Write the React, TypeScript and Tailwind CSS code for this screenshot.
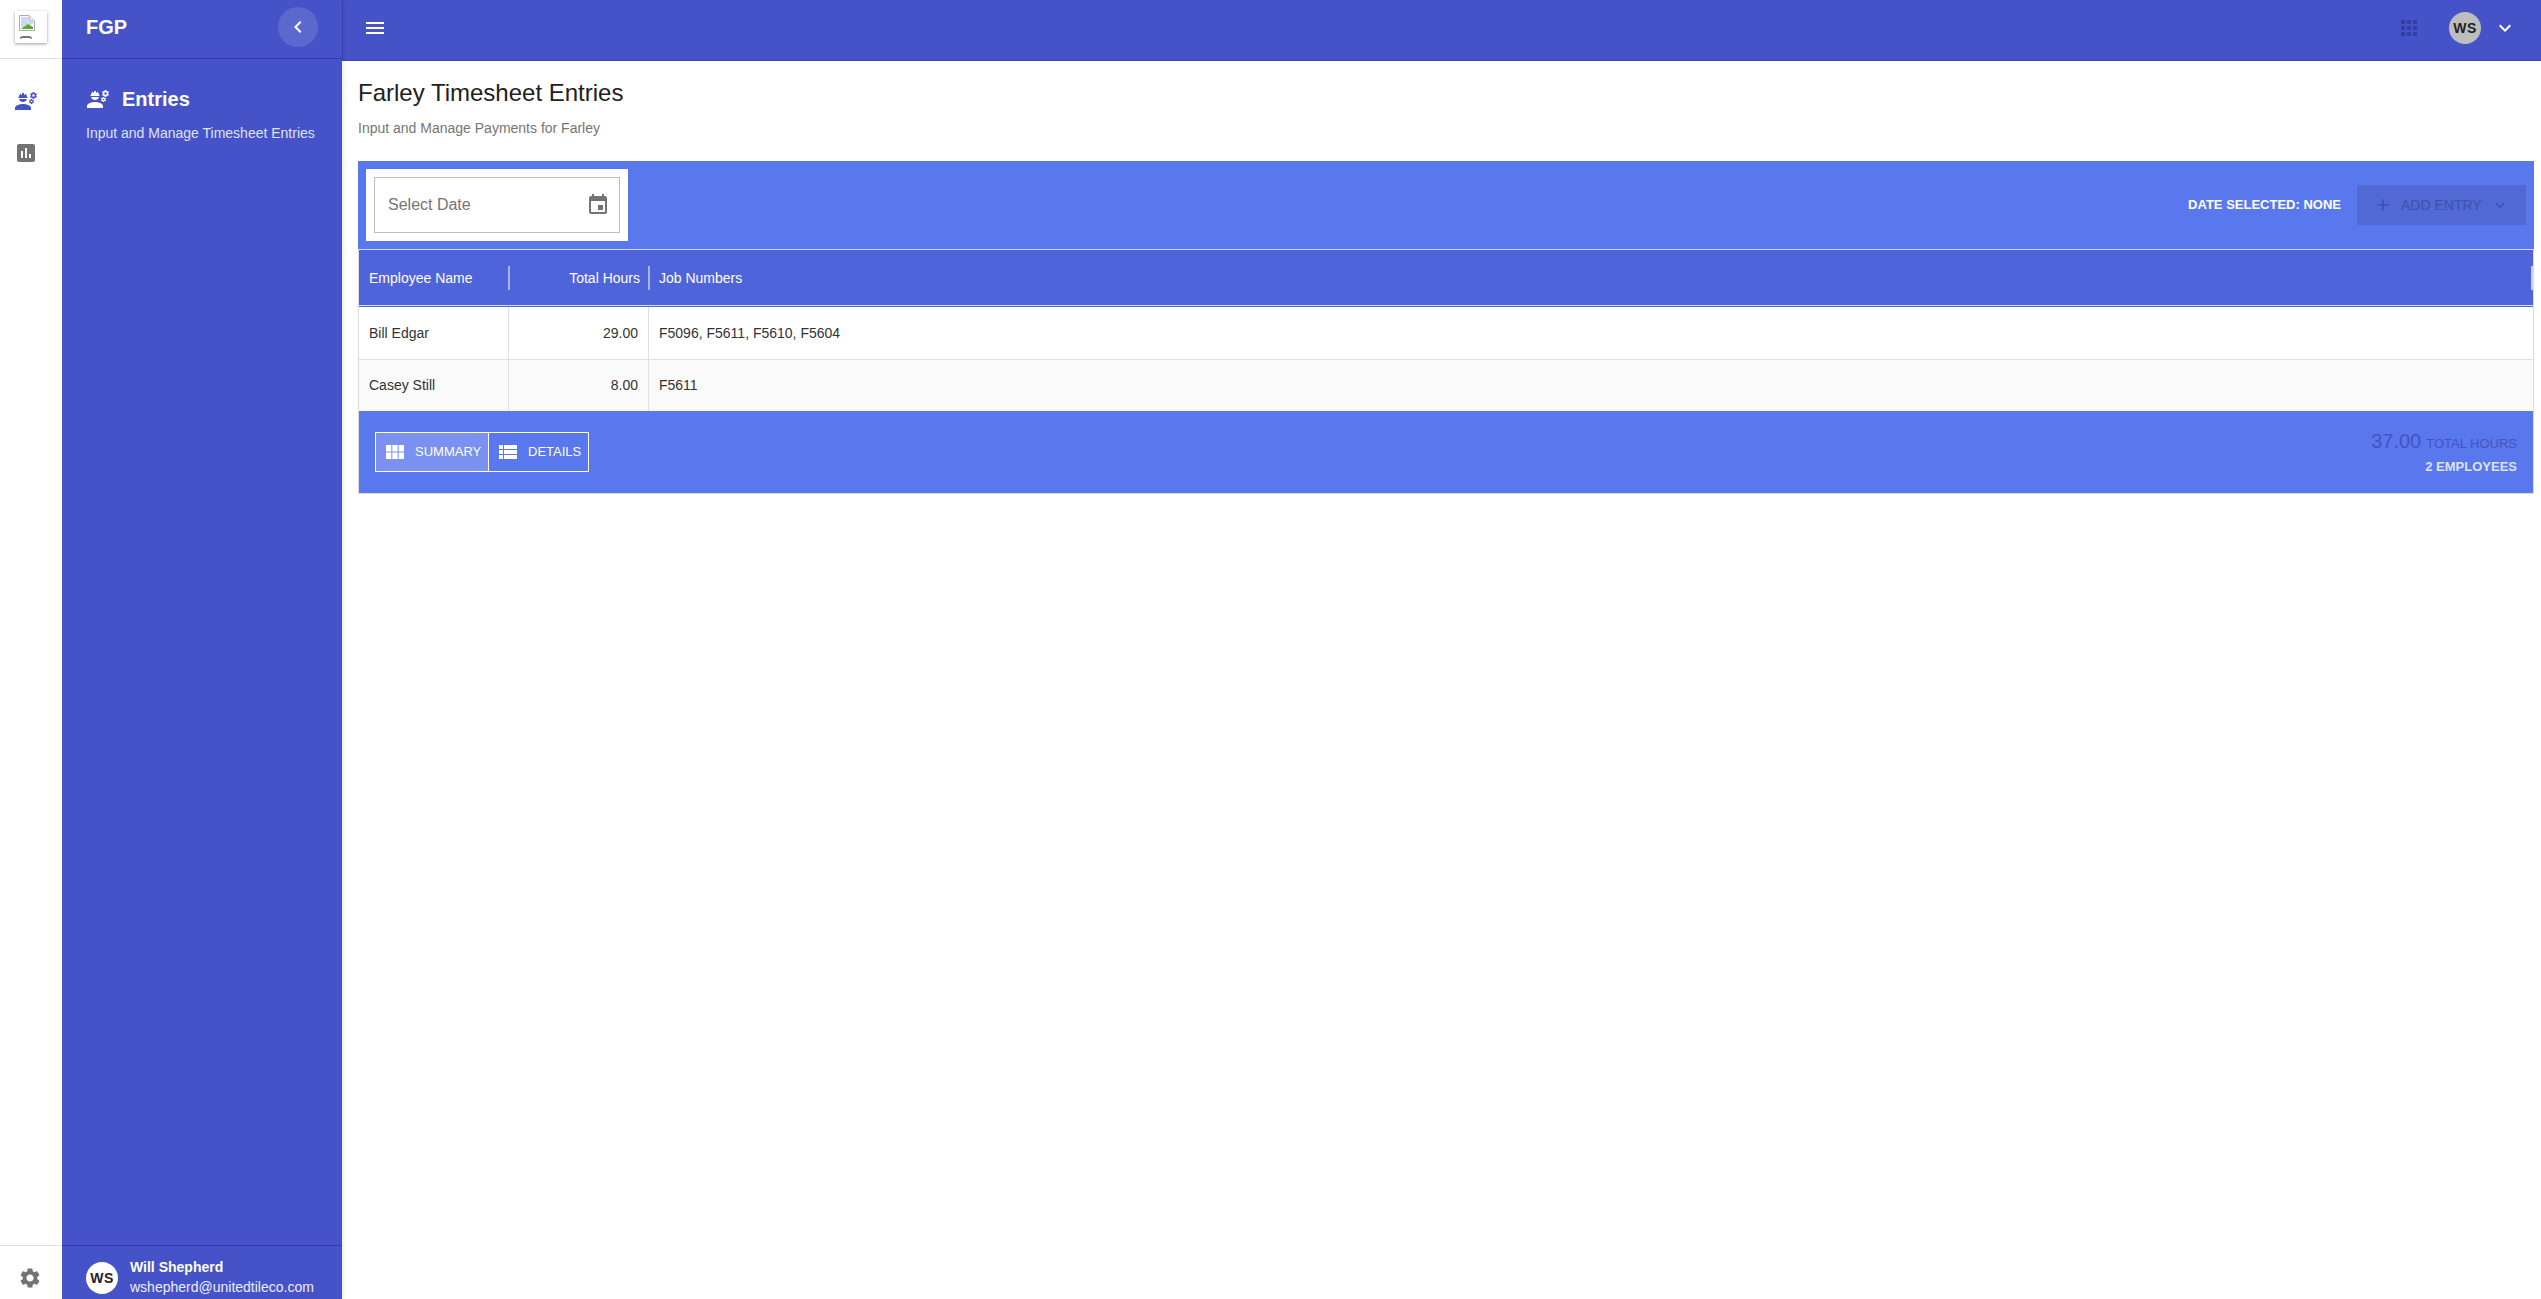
import React from "react";
import { MdEngineering, MdAssessment, MdSettings, MdEvent, MdViewModule, MdViewList, MdApps, MdMenu, MdKeyboardArrowDown, MdChevronLeft, MdAdd } from "react-icons/md";

function BrokenImage() {
  return (
    <svg width="16" height="16" viewBox="0 0 16 16">
      <path d="M0.5 0.5H10L15.5 6V15.5H0.5Z" fill="#fff" stroke="#a8adb3" />
      <path d="M10 .5V6H15.5" fill="#e8eaed" stroke="#a8adb3" />
      <path d="M2 2H9V7L14 7V9L2 13Z" fill="#c6d9f7" />
      <path d="M2 14L9 9L14 12V14Z" fill="#5fa82a" />
    </svg>
  );
}

function Rail() {
  return (
    <aside className="w-[62px] shrink-0 h-full bg-white flex flex-col">
      <div className="h-[59px] shrink-0 border-b border-[#e0e0e0] flex items-start justify-center pt-[11px]">
        <div className="w-[32px] h-[32px] bg-white shadow-[0_1px_3px_rgba(0,0,0,0.4)] flex flex-col items-start overflow-hidden pt-[4px] pl-[4px]">
          <BrokenImage />
          <div className="w-[12px] h-[3px] ml-[1px] mt-[5px] border-t-2 border-x border-[#777] rounded-t-sm" />
        </div>
      </div>
      <div className="flex-1 flex flex-col items-start pl-[14px] pt-[30px] gap-[28px]">
        <MdEngineering className="text-[#4652c6]" size={24} />
        <MdAssessment className="text-[#737373]" size={24} />
      </div>
      <div className="h-[54px] shrink-0 border-t border-[#e0e0e0] flex items-start pl-[18px] pt-[20px]">
        <MdSettings className="text-[#737373]" size={24} />
      </div>
    </aside>
  );
}

function Sidebar() {
  return (
    <aside className="w-[280px] shrink-0 h-full bg-[#4653c8] flex flex-col text-white shadow-[2px_0_4px_rgba(0,0,0,0.08)] z-10">
      <div className="h-[59px] shrink-0 border-b border-[#3a3ab0] flex items-start justify-between pl-[24px] pr-[24px] pt-[7px]">
        <span className="text-[20px] font-bold leading-[24px] mt-[8px]">FGP</span>
        <div className="w-[40px] h-[40px] rounded-full bg-[#5d68cf] flex items-center justify-center">
          <MdChevronLeft size={24} />
        </div>
      </div>
      <div className="flex-1 pl-[24px] pt-[26px]">
        <div className="flex items-center gap-[12px] h-[28px]">
          <MdEngineering size={24} />
          <span className="text-[20px] font-bold">Entries</span>
        </div>
        <p className="text-[14px] mt-[10px] text-[#dfe2f7] leading-[20px]">Input and Manage Timesheet Entries</p>
      </div>
      <div className="h-[54px] shrink-0 border-t border-[#3a3ab0] flex items-start pl-[24px] pt-[16px] gap-[12px]">
        <div className="w-[32px] h-[32px] rounded-full bg-white text-[#222] font-bold text-[14px] flex items-center justify-center tracking-[0.5px]">WS</div>
        <div className="-mt-[5px]">
          <div className="text-[14px] font-bold leading-[20px]">Will Shepherd</div>
          <div className="text-[14px] leading-[21px] text-[#eceefb]">wshepherd@unitedtileco.com</div>
        </div>
      </div>
    </aside>
  );
}

function TopBar() {
  return (
    <header className="h-[61px] shrink-0 bg-[#4653c8] border-b border-l border-[#3c45b8] flex items-start justify-between pl-[20px] pr-[24px] pt-[12px] text-white">
      <MdMenu size={24} className="mt-[4px]" />
      <div className="flex items-center">
        <MdApps size={24} className="text-[#323ea0] mr-[28px]" />
        <div className="w-[32px] h-[32px] rounded-full bg-[#bdbdbd] text-[#222] font-bold text-[14px] flex items-center justify-center tracking-[0.5px]">WS</div>
        <MdKeyboardArrowDown size={24} className="ml-[12px]" />
      </div>
    </header>
  );
}

const rows = [
  { name: "Bill Edgar", hours: "29.00", jobs: "F5096, F5611, F5610, F5604", bg: "bg-white" },
  { name: "Casey Still", hours: "8.00", jobs: "F5611", bg: "bg-[#fafafa]" },
];

function Panel() {
  return (
    <div className="mr-[7px] text-[14px]">
      <div className="h-[88px] bg-[#5a78ed] flex items-start justify-between pl-[8px] pr-[8px] pt-[8px]">
        <div className="bg-white p-[8px] w-[262px] h-[72px]">
          <div className="h-[56px] border border-[#bdbdbd] flex items-center justify-between pl-[13px] pr-[9px]">
            <span className="text-[16px] text-[#757575]">Select Date</span>
            <MdEvent size={24} className="text-[#737373]" />
          </div>
        </div>
        <div className="flex items-center mt-[16px]">
          <span className="text-[13px] font-bold text-white mr-[16px]">DATE SELECTED: NONE</span>
          <div className="w-[169px] h-[40px] bg-[#5268d4] flex items-center pl-[16px] text-[#3f50ad] text-[14px]">
            <MdAdd size={20} />
            <span className="ml-[8px]">ADD ENTRY</span>
            <MdKeyboardArrowDown size={20} className="ml-[8px]" />
          </div>
        </div>
      </div>
      <div className="border-x border-[#dcdcdc] border-b">
        <div className="h-[58px] pb-[1px] bg-[#4f63da]">
          <div className="h-full border-y border-[#d6dcfa] flex items-center text-white">
            <div className="w-[151px] pl-[10px] pr-[8px] pt-[1px] h-[24px] flex items-center border-r-2 border-[#a9b3ec]">Employee Name</div>
            <div className="w-[140px] pr-[8px] pt-[1px] h-[24px] flex items-center justify-end border-r-2 border-[#a9b3ec]">Total Hours</div>
            <div className="flex-1 pl-[9px] pt-[1px] h-[24px] flex items-center border-r-2 border-[#c9cff0]">Job Numbers</div>
          </div>
        </div>
        {rows.map((r, i) => (
          <div key={r.name} className={`flex text-[#333] ${r.bg} ${i === 0 ? "h-[53px] border-b border-[#e0e0e0]" : "h-[51px]"}`}>
            <div className="w-[150px] pl-[10px] flex items-center border-r border-[#e0e0e0]">{r.name}</div>
            <div className="w-[140px] pr-[10px] flex items-center justify-end border-r border-[#e0e0e0]">{r.hours}</div>
            <div className="flex-1 pl-[10px] flex items-center">{r.jobs}</div>
          </div>
        ))}
        <div className="h-[82px] bg-[#5a78ed] flex items-start justify-between pl-[16px] pr-[16px] pt-[21px] text-white">
          <div className="flex h-[40px] border border-white text-[13px]">
            <div className="w-[113px] bg-[#7a91f0] border-r border-white flex items-center pl-[7px]">
              <MdViewModule size={24} />
              <span className="ml-[8px]">SUMMARY</span>
            </div>
            <div className="w-[99px] flex items-center pl-[7px]">
              <MdViewList size={24} />
              <span className="ml-[8px]">DETAILS</span>
            </div>
          </div>
          <div className="text-right -mt-[3px]">
            <div className="flex items-baseline justify-end gap-[5px] text-[#4553c4] leading-[24px]">
              <span className="text-[20px]">37.00</span>
              <span className="text-[13px]">TOTAL HOURS</span>
            </div>
            <div className="text-[13px] font-bold text-[#dde2fb] mt-[2px] leading-[18px]">2 EMPLOYEES</div>
          </div>
        </div>
      </div>
    </div>
  );
}

export default function App() {
  return (
    <div className="h-screen w-full flex overflow-hidden bg-white font-['Liberation_Sans',sans-serif]">
      <Rail />
      <Sidebar />
      <main className="flex-1 min-w-0 flex flex-col">
        <TopBar />
        <div className="pl-[16px] pt-[16px]">
          <h1 className="text-[24px] leading-[32px] text-[#212121]">Farley Timesheet Entries</h1>
          <p className="text-[14px] leading-[20px] text-[#757575] mt-[9px] mb-[23px]">Input and Manage Payments for Farley</p>
          <Panel />
        </div>
      </main>
    </div>
  );
}
